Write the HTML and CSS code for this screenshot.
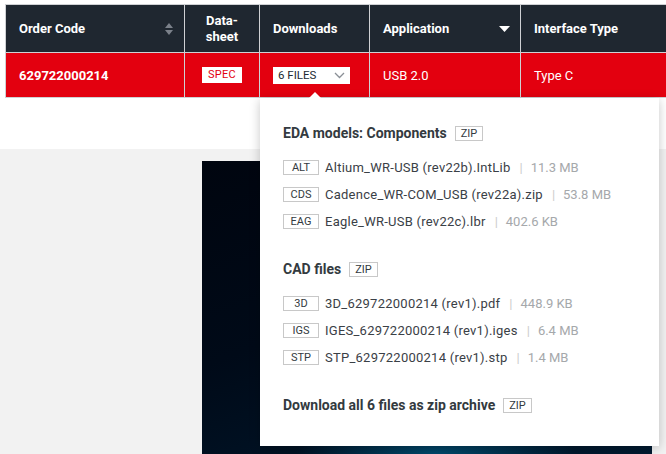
FILE: index.html
```html
<!DOCTYPE html>
<html lang="en">
<head>
<meta charset="utf-8">
<title>Product table</title>
<link rel="stylesheet" href="styles.css">
</head>
<body>
<div class="page">
  <section class="top">
    <div class="table">
      <div class="cell head c1">
        <span>Order Code</span>
        <svg class="sort" width="10" height="14" viewBox="0 0 10 14"><path d="M1 6 L5 1 L9 6 Z M1 8 L9 8 L5 13 Z" fill="#7b818a"/></svg>
      </div>
      <div class="cell head c2 center"><span>Data-<br>sheet</span></div>
      <div class="cell head c3"><span>Downloads</span></div>
      <div class="cell head c4">
        <span>Application</span>
        <svg class="tri" width="11" height="6" viewBox="0 0 11 6"><path d="M0 0 L11 0 L5.5 6 Z" fill="#ffffff"/></svg>
      </div>
      <div class="cell head c5"><span>Interface Type</span></div>

      <div class="cell row c1"><span class="code">629722000214</span></div>
      <div class="cell row c2 center"><span class="spec">SPEC</span></div>
      <div class="cell row c3">
        <span class="select">6 FILES
          <svg width="11" height="7" viewBox="0 0 11 7"><path d="M1 1 L5.5 5.5 L10 1" fill="none" stroke="#8a8f96" stroke-width="1.3"/></svg>
        </span>
      </div>
      <div class="cell row c4"><span>USB 2.0</span></div>
      <div class="cell row c5"><span>Type C</span></div>
    </div>
  </section>
  <section class="gray">
    <div class="hero"></div>
  </section>

  <div class="panel">
    <div class="pointer"></div>
    <div class="group">
      <h3 class="gh">EDA models: Components <span class="tag">ZIP</span></h3>
      <ul class="files">
        <li><span class="ft">ALT</span><span class="fn">Altium_WR-USB (rev22b).IntLib</span><span class="sep">|</span><span class="fs">11.3 MB</span></li>
        <li><span class="ft">CDS</span><span class="fn">Cadence_WR-COM_USB (rev22a).zip</span><span class="sep">|</span><span class="fs">53.8 MB</span></li>
        <li><span class="ft">EAG</span><span class="fn">Eagle_WR-USB (rev22c).lbr</span><span class="sep">|</span><span class="fs">402.6 KB</span></li>
      </ul>
    </div>
    <div class="group">
      <h3 class="gh">CAD files <span class="tag">ZIP</span></h3>
      <ul class="files">
        <li><span class="ft">3D</span><span class="fn">3D_629722000214 (rev1).pdf</span><span class="sep">|</span><span class="fs">448.9 KB</span></li>
        <li><span class="ft">IGS</span><span class="fn">IGES_629722000214 (rev1).iges</span><span class="sep">|</span><span class="fs">6.4 MB</span></li>
        <li><span class="ft">STP</span><span class="fn">STP_629722000214 (rev1).stp</span><span class="sep">|</span><span class="fs">1.4 MB</span></li>
      </ul>
    </div>
    <h3 class="gh all">Download all 6 files as zip archive <span class="tag">ZIP</span></h3>
  </div>
</div>
</body>
</html>
```

FILE: styles.css
```css
* { box-sizing: border-box; }
html, body { margin: 0; padding: 0; }
body {
  font-family: Roboto, "Liberation Sans", sans-serif;
  background: #ffffff;
  width: 666px;
  height: 454px;
  overflow: hidden;
}
.page { position: relative; width: 666px; height: 454px; overflow: hidden; }

.top {
  height: 149px;
  padding: 4px 0 0 5px;
  background: #ffffff;
}
.table {
  display: grid;
  grid-template-columns: 179px 75px 110px 151px 146px;
  grid-template-rows: 48px 45px;
  width: 661px;
  border-top: 1px solid #cfd1d4;
  border-left: 1px solid #cfd1d4;
}
.cell {
  display: flex;
  align-items: center;
  border-right: 1px solid #cfd1d4;
  border-bottom: 1px solid #cfd1d4;
  color: #ffffff;
  font-size: 13px;
}
.cell.c5 { border-right: none; }
.head {
  background: #1f2730;
  font-weight: 700;
  padding: 0 13px;
  justify-content: space-between;
}
.head.center, .row.center { justify-content: center; text-align: center; }
.head.c2 span { line-height: 16px; }
.head.c1 { padding-right: 10px; }
.head.c4 { padding-right: 10px; }
.row {
  background: #e3000f;
  padding: 0 13px;
}
.code { font-weight: 700; }
.spec {
  background: #ffffff;
  color: #e3000f;
  font-size: 11px;
  line-height: 16px;
  padding: 0 6px;
  letter-spacing: 0.3px;
}
.select {
  display: flex;
  align-items: center;
  justify-content: space-between;
  width: 77px;
  height: 17px;
  background: #ffffff;
  color: #222a33;
  font-size: 11.5px;
  padding: 0 5px 0 5px;
}

.gray {
  height: 305px;
  background: #f2f2f2;
  padding: 12px 0 0 202px;
}
.hero {
  width: 450px;
  height: 293px;
  background:
    radial-gradient(ellipse 140px 40px at 52% 100%, rgba(0, 90, 130, 0.75), rgba(0, 90, 130, 0) 100%),
    linear-gradient(160deg, #00050f 0%, #000a18 45%, #001a30 100%);
}

.panel {
  position: absolute;
  left: 260px;
  top: 98px;
  width: 399px;
  height: 348px;
  background: #ffffff;
  box-shadow: 0 2px 10px rgba(0, 0, 0, 0.22);
  padding: 25px 23px 0 23px;
  color: #333a40;
}
.pointer {
  position: absolute;
  left: 48px;
  top: -6px;
  width: 0;
  height: 0;
  border-left: 7px solid transparent;
  border-right: 7px solid transparent;
  border-bottom: 7px solid #ffffff;
}
.group { margin-bottom: 24px; }
.gh {
  margin: 0;
  display: flex;
  align-items: center;
  height: 20px;
  font-size: 14px;
  font-weight: 700;
  color: #333a40;
}
.tag {
  display: inline-block;
  margin-left: 8px;
  border: 1px solid #c8c8c8;
  font-size: 11px;
  font-weight: 400;
  line-height: 13px;
  padding: 0 5px;
  color: #333a40;
}
.files {
  list-style: none;
  margin: 11px 0 0 0;
  padding: 0;
}
.files li {
  display: flex;
  align-items: center;
  height: 27px;
  font-size: 13px;
}
.ft {
  width: 36px;
  height: 15px;
  border: 1px solid #c8c8c8;
  font-size: 11px;
  line-height: 13px;
  text-align: center;
  margin-right: 6px;
  color: #333a40;
}
.fn { color: #3a4046; letter-spacing: 0.25px; }
.sep { color: #cccccc; margin: 0 8px 0 9px; }
.fs { color: #a5a8ab; }
.all { margin-top: 1px; }
```
